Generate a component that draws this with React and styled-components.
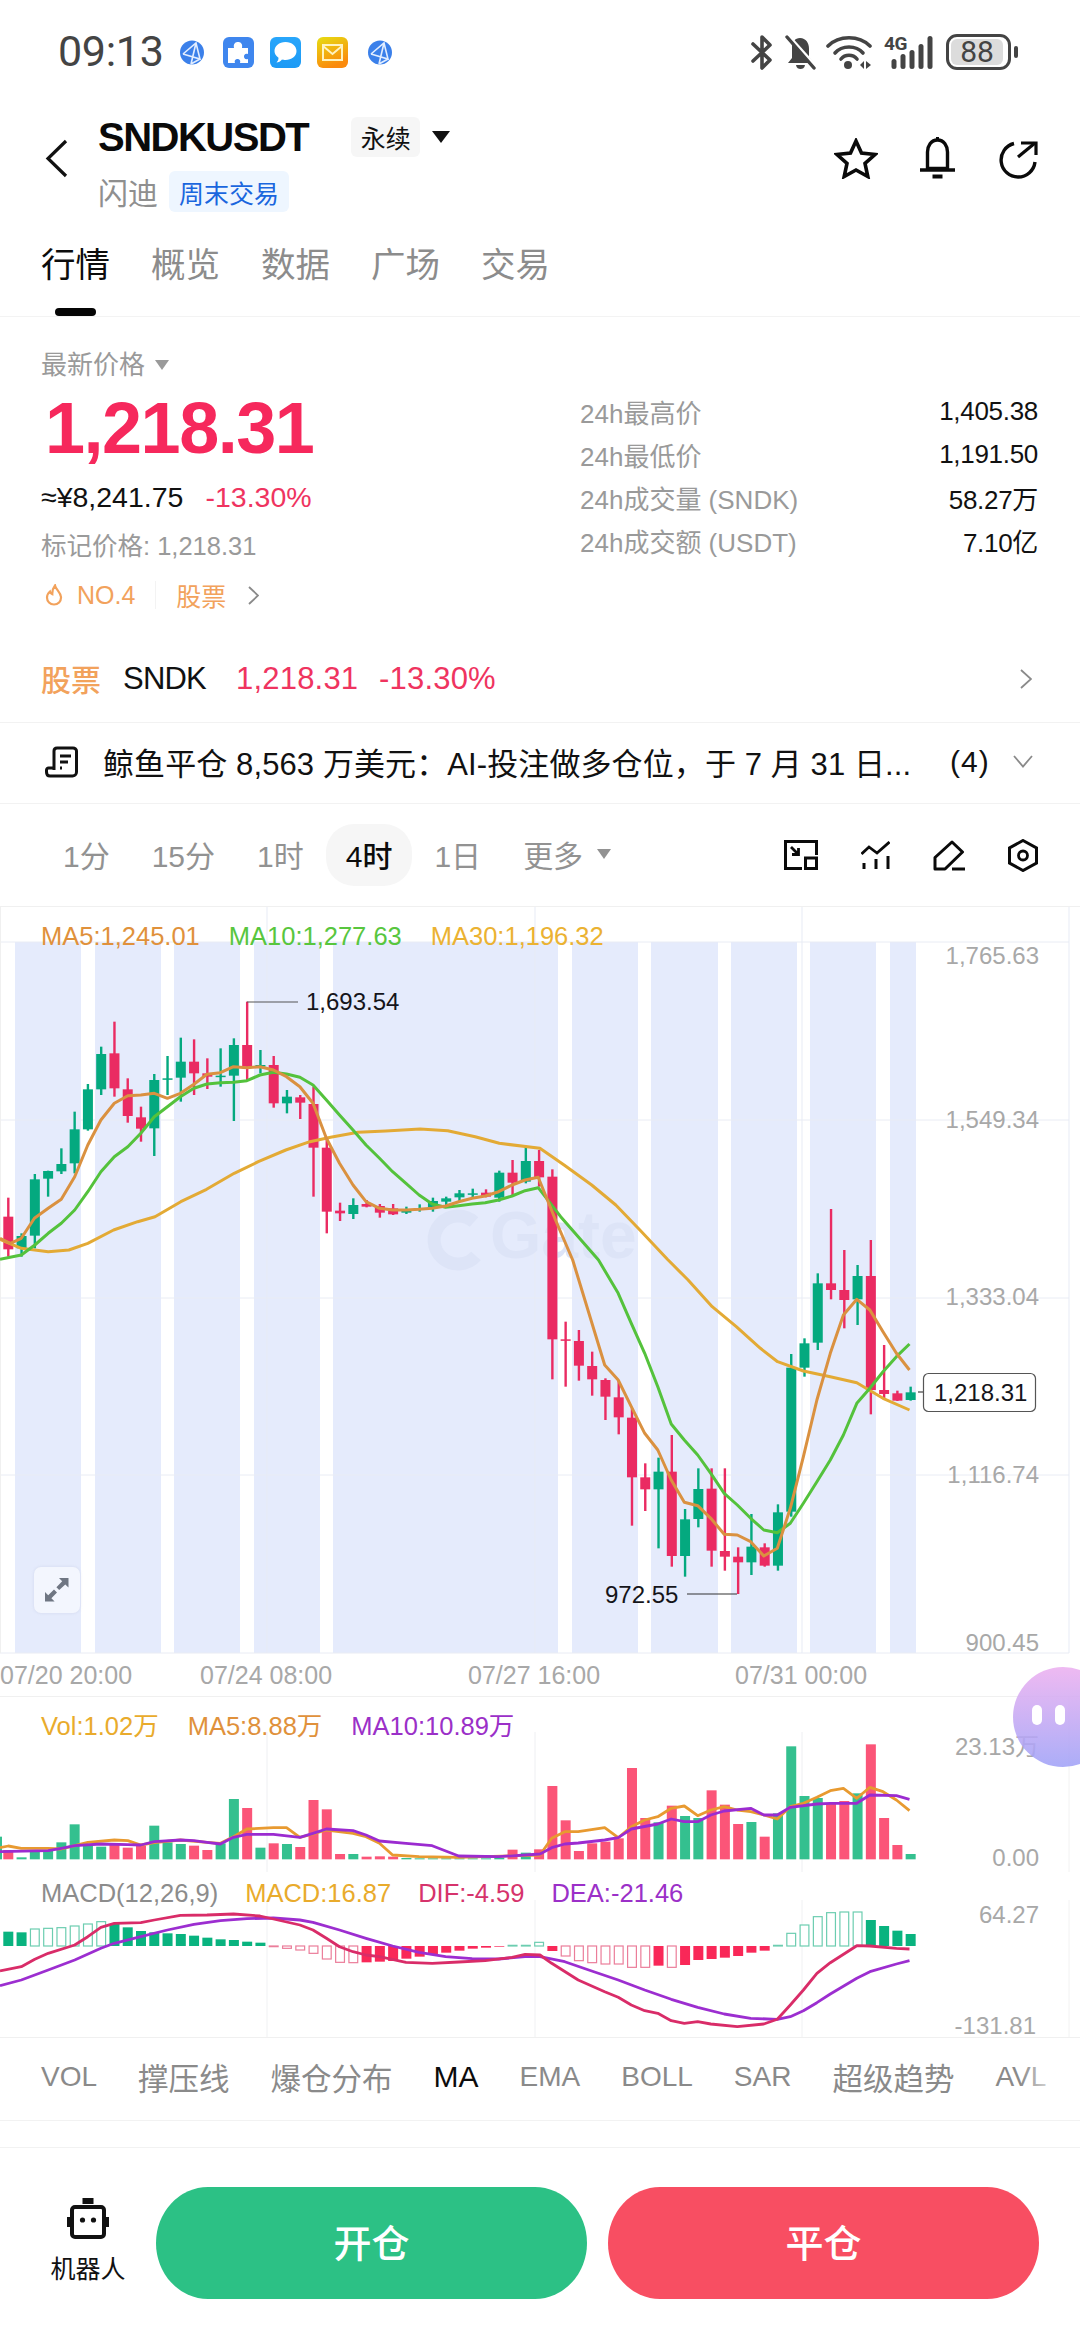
import React from 'react';
import styled, { createGlobalStyle } from 'styled-components';

const SANS = '"Liberation Sans", "Noto Sans CJK SC", sans-serif';

const Global = createGlobalStyle`
  html, body { margin: 0; padding: 0; background: #fff; }
  body { font-family: ${SANS}; }
  * { box-sizing: border-box; }
`;

const RED = '#ea2b62';
const GREEN = '#04a97f';
const VRED = '#fb5578';
const VGREEN = '#34c08f';
const X = i => 8.3 + 13.27 * i;
const P1 = 907, P2 = 1697, P3 = 1872;

const candlesA = [
  ['r',893,1070,950,1048],['g',1000,1070,1008,1045],['g',822,1045,838,1007],['g',812,890,813,836],['g',745,822,792,814],
  ['g',635,820,688,790],['g',552,692,568,688],['g',440,585,462,568],['r',365,590,460,565],['r',535,668,568,648],
  ['r',620,725,652,686],['g',522,768,540,685],['g',468,585,535,538],['g',413,605,485,533],['r',418,585,485,520],
  ['r',475,567,520,530],['g',445,560,527,531],['g',415,663,435,527],['r',305,540,435,500],['g',450,520,495,500],
  ['r',468,623,495,610],['g',570,640,590,610],['r',585,657,592,608],['r',560,890,612,743],['r',715,1000,743,935],
  ['r',908,963,932,940],['g',895,957,915,942],['r',900,922,912,920],['r',912,953,918,938],['r',912,945,925,943],
  ['g',920,942,928,938],['g',913,935,925,930],['g',893,935,903,922],['g',890,918,895,905],['g',870,903,880,892],
  ['g',866,895,880,884],['r',868,892,878,890],['g',812,905,818,893],['r',780,885,818,848],['g',740,850,783,845],
  ['r',750,860,783,832],
];
const candlesB = [
  ['r',-272,358,-250,238],['r',185,380,238,242],['r',210,362,243,317],['r',275,407,318,358],['r',355,480,360,410],
  ['r',360,523,412,472],['r',445,797,473,652],['r',610,753,652,688],['g',593,865,635,688],['r',525,920,635,888],
  ['g',747,950,778,888],['g',625,802,687,777],['r',625,920,686,872],['r',625,932,873,890],['r',862,1002,890,907],
  ['g',762,945,860,907],['r',850,920,862,917],['g',733,932,757,917],['g',282,770,323,755],['g',235,350,250,323],
  ['g',40,270,70,248],['r',-153,118,70,90],['r',-30,205,90,120],['g',15,195,48,118],['r',-60,463,48,390],
  ['r',255,418,390,402],['r',392,423,400,422],['g',380,422,397,420],
];
const candles = [
  ...candlesA.map(c => [c[0], 900 + c[1] / 3, 900 + c[2] / 3, 900 + c[3] / 3, 900 + c[4] / 3]),
  ...candlesB.map(c => [c[0], 1260 + c[1] / 3, 1260 + c[2] / 3, 1260 + c[3] / 3, 1260 + c[4] / 3]),
];

const line = (segs, top) => segs.flatMap(([pts, ox, oy]) =>
  pts.map(([x, y]) => `${(ox + x / 2.904).toFixed(1)},${(oy + y / 3 - top).toFixed(1)}`)).join(' ');

const ma5 = line([
  [[[0,1015],[30,1030],[62,1015],[100,955],[140,925],[178,898],[217,830],[255,735],[293,660],[332,610],[371,587],[409,585],[448,580],[486,595],[524,580],[563,553],[601,523],[640,518],[678,500],[717,503],[755,500],[794,510],[832,530],[871,560],[909,610],[948,715],[986,790],[1025,855],[1063,905],[1102,925],[1140,930],[1179,930],[1217,928],[1255,925],[1294,918],[1332,905],[1371,895],[1409,888],[1448,875],[1487,855],[1525,840],[1563,832]],0,900],
  [[[45,960],[95,1080]],540,900],
  [[[188,315],[227,360],[265,440],[304,520],[342,570],[381,660],[419,727],[458,737],[496,775],[535,823],[573,825],[612,845],[650,888],[689,865],[727,745],[765,590],[804,420],[843,280],[881,165],[920,118],[958,150],[996,215],[1035,280],[1073,330]],540,1260],
], P1);
const ma10 = line([
  [[[0,1078],[62,1065],[101,1035],[140,1000],[178,970],[217,930],[255,875],[293,815],[332,770],[371,740],[409,700],[448,650],[486,620],[524,590],[563,565],[601,552],[640,548],[678,547],[717,542],[755,525],[794,517],[832,522],[871,532],[909,555],[948,600],[986,645],[1025,690],[1063,735],[1102,775],[1140,815],[1179,850],[1217,885],[1255,912],[1294,922],[1332,917],[1371,912],[1409,908],[1448,900],[1487,888],[1525,872],[1563,863]],0,900],
  [[[60,950],[170,1080]],540,900],
  [[[227,100],[265,190],[304,280],[342,380],[381,492],[419,540],[458,585],[496,640],[535,700],[573,735],[612,775],[650,810],[689,818],[727,790],[765,730],[804,665],[843,600],[881,525],[920,430],[958,385],[996,335],[1035,290],[1073,252]],540,1260],
], P1);
const ma30 = line([
  [[[0,1018],[62,1045],[140,1055],[200,1050],[255,1030],[330,990],[400,965],[450,950],[525,905],[600,868],[680,820],[750,785],[830,750],[900,725],[960,712],[1040,697],[1120,693],[1220,687],[1300,692],[1380,710],[1450,730],[1568,745]],0,900],
  [[[70,795],[150,855],[220,915],[290,990],[370,1078]],540,900],
  [[[430,60],[500,140],[570,200],[640,265],[690,305],[765,333],[843,350],[920,368],[996,415],[1073,450]],540,1260],
], P1);

const bands = [[15,81],[95,161],[174,240],[254,320],[333,558],[572,638],[651,718],[731,797],[810,876],[890,916]];

const volTops = [[ 'r',510],['g',532],['g',515],['g',512],['g',487],['g',433],['g',495],['g',500],['r',490],['r',503],['r',497],['g',437],['g',487],['g',492],['r',497],['r',510],['g',490],['g',357],['r',384],['g',503],['r',490],['g',492],['r',501],['r',360],['r',388],['r',522],['g',522],['r',530],['r',529],['r',530],['g',534],['g',535],['g',535],['g',535],['g',535],['g',535],['g',535],['g',533],['r',509],['g',518],['r',508],
  ['r',318],['r',421],['r',513],['r',490],['r',485],['r',475],['r',264],['r',414],['g',427],['r',377],['g',408],['g',414],['r',331],['r',374],['r',432],['g',426],['r',470],['g',400],['g',199],['g',348],['g',354],['r',370],['r',363],['g',340],['r',193],['r',414],['r',495],['g',522]];

const volMa5 = line([
  [[[0,503],[24,498],[62,505],[140,505],[178,507],[217,497],[255,487],[332,480],[371,482],[409,495],[448,488],[524,480],[601,487],[640,490],[678,470],[717,447],[794,443],[832,443],[871,472],[909,462],[948,450],[1025,460],[1063,470],[1102,490],[1140,525],[1217,530],[1332,532]],0,1680],
  [[[0,525],[34,475],[72,455],[111,455],[188,443],[227,473],[265,440],[304,420],[342,410],[381,385],[419,378],[458,407],[496,390],[535,380],[573,390],[612,395],[650,405],[689,417],[727,380],[765,370],[804,352],[843,332],[881,325],[920,355],[958,322],[996,335],[1035,360],[1073,392]],540,1680],
], P2);
const volMa10 = line([
  [[[0,515],[140,512],[178,505],[217,497],[293,492],[371,494],[409,495],[448,485],[524,480],[563,482],[601,487],[640,492],[678,472],[717,463],[794,463],[871,472],[909,460],[948,447],[1025,452],[1063,465],[1102,483],[1179,490],[1255,497],[1332,528],[1448,530]],0,1680],
  [[[0,522],[34,503],[72,492],[111,489],[188,480],[227,473],[265,447],[342,432],[381,417],[419,425],[458,425],[496,405],[535,393],[612,385],[650,405],[689,405],[727,382],[804,372],[843,370],[920,370],[958,345],[1035,347],[1073,358]],540,1680],
], P2);

const macd = [[755,1],[757,1],[747,0],[745,0],[743,0],[738,0],[732,0],[725,0],[732,1],[742,1],[753,1],[757,1],[760,1],[762,1],[767,1],[773,1],[778,1],[780,1],[785,1],[788,1],
  [800,0],[805,0],[810,0],[820,0],[837,0],[847,0],[848,0],[847,1],[845,1],[843,1],[836,1],[830,1],[822,1],[818,1],[812,1],[806,1],[803,1],[800,1],[796,0],[796,0],[787,0],
  [813,1],[828,0],[842,0],[848,0],[852,0],[852,0],[862,0],[862,0],[857,1],[862,0],[855,1],[840,1],[837,1],[833,1],[828,1],[818,1],[812,1],[796,0],[760,0],[735,0],[710,0],[698,0],[696,0],[696,0],[720,1],[738,1],[752,1],[762,1]];

const dif = line([
  [[[0,873],[62,860],[101,838],[140,820],[217,795],[255,770],[293,742],[332,730],[409,728],[448,720],[524,706],[601,705],[678,702],[755,708],[794,717],[871,735],[909,750],[948,775],[986,800],[1025,815],[1063,825],[1102,830],[1179,847],[1255,850],[1332,846],[1409,842],[1487,832],[1525,823]],0,1680],
  [[[0,825],[34,850],[111,900],[188,935],[227,952],[265,975],[304,992],[342,1000],[381,1022],[419,1030],[458,1025],[496,1032],[573,1040],[650,1032],[689,1018],[727,975],[765,930],[804,880],[843,848],[920,797],[958,798],[1035,805],[1073,807]],540,1680],
], P3);
const dea = line([
  [[[0,917],[62,900],[140,870],[217,840],[293,805],[332,790],[409,770],[486,750],[563,733],[640,722],[717,716],[794,714],[871,720],[909,727],[986,750],[1063,775],[1140,798],[1217,817],[1294,830],[1371,836],[1448,837],[1525,830]],0,1680],
  [[[0,830],[72,845],[150,873],[227,900],[304,930],[381,958],[458,982],[535,1002],[612,1015],[689,1018],[727,1010],[765,992],[804,968],[843,942],[920,895],[958,875],[1035,852],[1073,842]],540,1680],
], P3);

const Page = styled.div`
  position: relative; width: 1080px; height: 2340px; overflow: hidden; background: #fff;
  font-family: ${SANS}; color: #111;
`;
const StatusBar = styled.div`
  height: 104px; display: flex; align-items: center; padding: 0 62px 0 58px;
`;
const Clock = styled.span`
  font-family: Roboto, sans-serif; font-size: 43px; color: #444; width: 122px; letter-spacing: -0.3px; padding-bottom: 2px;
`;
const AppIcons = styled.div`display: flex; align-items: center; gap: 16px;`;
const AppSlot = styled.span`display: flex; margin: 0 ${p => p.$r || 0}px 0 ${p => p.$l || 0}px;`;
const StatusRight = styled.div`margin-left: auto; display: flex; align-items: center; height: 40px;`;
const SignalBox = styled.div`
  position: relative; width: 50px; height: 34px; margin-left: 12px; display: flex; align-items: flex-end; justify-content: flex-end;
`;
const Net = styled.span`
  position: absolute; left: 0; top: -3px; font-family: Roboto, sans-serif; font-weight: 700; font-size: 19px; color: #444; letter-spacing: -0.5px;
`;
const Battery = styled.div`
  width: 65px; height: 36px; margin-left: 12px; border: 3px solid #444; border-radius: 11px; padding: 2px;
  display: flex;
`;
const BatteryFill = styled.div`
  width: 52px; background: #dcdcdc; border-radius: 6px; display: flex; align-items: center; justify-content: center;
  font-family: Roboto, sans-serif; font-size: 30px; color: #444; line-height: 1;
`;
const BatteryNub = styled.div`width: 4px; height: 12px; background: #444; border-radius: 2px; margin-left: 3px;`;

const Header = styled.div`height: 120px; display: flex; padding-left: 45px; position: relative;`;
const BackWrap = styled.div`width: 53px; padding-top: 35px;`;
const TitleCol = styled.div`display: flex; flex-direction: column; padding-top: 13px;`;
const TitleRow = styled.div`display: flex; align-items: center; height: 40px;`;
const Title = styled.span`font-size: 40px; font-weight: 700; letter-spacing: -1.5px; color: #0a0a0a; line-height: 40px;`;
const KindTag = styled.span`
  margin-left: 43px; width: 69px; height: 40px; background: #f6f6f6; border-radius: 6px; font-size: 25px; color: #111;
  display: flex; align-items: center; justify-content: center;
`;
const Tri = styled.span`
  display: inline-block; width: 0; height: 0; border-left: ${p => p.$w / 2}px solid transparent; border-right: ${p => p.$w / 2}px solid transparent;
  border-top: ${p => p.$h}px solid ${p => p.$c}; margin-left: ${p => p.$m}px;
`;
const SubRow = styled.div`display: flex; align-items: center; margin-top: 14px; height: 41px;`;
const SubName = styled.span`font-size: 30px; color: #8f8f8f; width: 71px; padding-bottom: 2px;`;
const WeekendTag = styled.span`
  width: 120px; height: 41px; background: #eef6ff; border-radius: 6px; color: #1a66de; font-size: 25px;
  display: flex; align-items: center; justify-content: center;
`;
const HeaderIcons = styled.div`margin-left: auto; padding: 33px 42px 0 0; display: flex; gap: 41px; align-items: flex-start;`;

const Tabs = styled.div`
  height: 93px; display: flex; gap: 41px; padding: 16px 0 0 41px; border-bottom: 1px solid #f3f3f3; position: relative;
`;
const Tab = styled.span`
  font-size: 34.5px; line-height: 50px; height: 50px; color: ${p => (p.$active ? '#0c0c0c' : '#8c8c8c')}; font-weight: 400;
  position: relative;
`;
const TabBar = styled.i`
  position: absolute; left: 14px; bottom: -26px; width: 41px; height: 8px; background: #050505; border-radius: 4px;
`;

const PriceSection = styled.section`height: 319px; display: flex; padding: 0 42px 0 41px;`;
const PriceLeft = styled.div`width: 539px; display: flex; flex-direction: column;`;
const LatestLabel = styled.div`
  margin-top: 33px; height: 30px; line-height: 30px; font-size: 26px; color: #9a9a9a; display: flex; align-items: center;
`;
const BigPrice = styled.div`
  margin-top: 10px; height: 76px; line-height: 76px; font-size: 72px; font-weight: 700; color: #f6285c; letter-spacing: -1.5px; padding-left: 4px;
`;
const SubPrice = styled.div`
  margin-top: 16px; height: 30px; line-height: 30px; font-size: 28.5px; color: #111; display: flex; gap: 22px;
`;
const Change = styled.span`color: ${p => p.$c || '#ef345f'};`;
const MarkPrice = styled.div`margin-top: 19px; height: 30px; line-height: 30px; font-size: 25.5px; color: #9a9a9a;`;
const HotRow = styled.div`
  margin-top: 19px; height: 30px; display: flex; align-items: center; font-size: 25px; color: #f2a25c;
`;
const HotSep = styled.span`width: 1px; height: 28px; background: #f3f3f3; margin: 0 20px 0 20px;`;
const StatsCol = styled.div`flex: 1; padding-top: 73px; display: flex; flex-direction: column;`;
const StatRow = styled.div`
  height: 43px; display: flex; align-items: center; justify-content: space-between; font-size: 26px;
`;
const StatLabel = styled.span`color: #9a9a9a;`;
const StatValue = styled.span`color: #111; letter-spacing: -0.3px;`;

const StockRow = styled.div`
  height: 87px; border-bottom: 1px solid #f2f2f2; display: flex; align-items: center; padding: 0 48px 0 41px; font-size: 31px;
`;
const StockTag = styled.span`font-size: 30px; color: #f2a25c; width: 82px; font-weight: 500; padding-bottom: 2px;`;
const StockName = styled.span`color: #111; width: 113px; letter-spacing: -0.8px;`;
const StockPrice = styled.span`color: ${p => p.$c}; width: ${p => p.$w}px; letter-spacing: 0.2px;`;
const PushRight = styled.span`margin-left: auto; display: flex;`;

const NewsRow = styled.div`
  height: 81px; border-bottom: 1px solid #f2f2f2; display: flex; align-items: center; padding: 0 47px 3px 45px;
`;
const NewsText = styled.span`margin-left: 25px; width: 805px; font-size: 31px; color: #111; white-space: nowrap; letter-spacing: 0.1px;`;
const NewsCount = styled.span`margin-left: 42px; font-size: 30px; color: #111; letter-spacing: 1px;`;

const TimeBar = styled.div`
  height: 103px; border-bottom: 1px solid #f0f0f0; display: flex; align-items: center; padding: 0 42px 0 43px; gap: 2px;
`;
const TimeItem = styled.span`
  height: 62px; padding: 0 20px 3px; display: flex; align-items: center; font-size: 30px; border-radius: 28px;
  color: ${p => (p.$active ? '#0c0c0c' : '#929292')}; background: ${p => (p.$active ? '#f6f6f6' : 'transparent')};
  font-weight: ${p => (p.$active ? 500 : 400)};
`;
const ToolIcons = styled.div`margin-left: auto; display: flex; gap: 43px; align-items: center;`;

const Pane = styled.div`
  position: relative; height: ${p => p.$h}px; ${p => (p.$line ? 'border-bottom: 1px solid #f0f0f0;' : '')}
`;
const Plot = styled.svg`position: absolute; left: 0; top: 0; width: 1080px; height: 100%;`;
const Legend = styled.div`
  position: relative; display: flex; gap: ${p => p.$gap || 30}px; padding: ${p => p.$top}px 0 0 41px; font-size: 25.5px; line-height: 30px; white-space: nowrap;
`;
const LegendItem = styled.span`color: ${p => p.$c};`;
const AxisText = styled.text`font-family: ${SANS}; font-size: ${p => p.$fs || 24}px; fill: ${p => p.$c || '#a8a8a8'}; text-anchor: ${p => p.$anchor || 'end'};`;
const MarkText = styled.text`font-family: ${SANS}; font-size: 24px; fill: #15151a;`;
const Watermark = styled.text`font-family: ${SANS}; font-size: 66px; font-weight: 700; fill: #dde4f7;`;

const ExpandBtn = styled.div`
  position: absolute; left: 34px; top: ${1567 - P1}px; width: 46px; height: 46px; background: #f3f6fe; border-radius: 7px;
  box-shadow: 0 0 3px rgba(150, 160, 190, .25); display: flex; align-items: center; justify-content: center;
`;
const Bubble = styled.div`
  position: absolute; left: 1013px; top: 1667px; width: 100px; height: 100px; border-radius: 50%;
  background: linear-gradient(180deg, rgba(236, 176, 240, .88) 0%, rgba(160, 162, 247, .88) 100%); display: flex; gap: 13px; padding: 38px 0 0 19px;
`;
const Eye = styled.i`width: 10px; height: 20px; border-radius: 5px; background: #fff; display: block;`;

const IndicatorBar = styled.div`
  height: 83px; display: flex; align-items: center; gap: 41px; padding: 0 0 5px 41px; overflow: hidden; white-space: nowrap; position: relative;
  border-bottom: 1px solid #f2f2f2;
`;
const Indicator = styled.span`
  font-size: ${p => (p.$active ? 30 : p.$latin ? 28 : 30.5)}px; color: ${p => (p.$active ? '#0c0c0c' : '#8a8a8a')};
`;
const FadeEdge = styled.i`
  position: absolute; right: 0; top: 0; bottom: 0; width: 60px; background: linear-gradient(90deg, rgba(255,255,255,0), #fff 75%);
`;
const Spacer = styled.div`height: 27px; border-bottom: 1px solid #f2f2f2;`;
const Footer = styled.div`display: flex; padding: 39px 41px 0 50px;`;
const Robot = styled.div`width: 76px; margin-right: 30px; display: flex; flex-direction: column; align-items: center; padding-top: 11px;`;
const RobotLabel = styled.span`font-size: 25px; color: #111; margin-top: 13px; line-height: 34px;`;
const TradeBtn = styled.div`
  width: 431px; height: 112px; border-radius: 52px / 56px; background: ${p => p.$c}; margin-left: ${p => p.$m || 0}px;
  color: #fff; font-size: 38px; font-weight: 500; display: flex; align-items: center; justify-content: center; padding-bottom: 5px;
`;

const Globe = () => (
  <svg width="24" height="25" viewBox="0 0 24 25">
    <circle cx="12" cy="12.5" r="12" fill="#3b80ea" />
    <path d="M3 14 L16 3 L20 19 L3 14 M16 3 L11 24 M20 19 L11 24" stroke="#e2edff" strokeWidth="1.6" fill="none" />
  </svg>
);
const Rounded = ({ fill, children }) => (
  <svg width="31" height="31" viewBox="0 0 31 31">
    {fill}
    {children}
  </svg>
);
const Puzzle = () => (
  <Rounded fill={<rect width="31" height="31" rx="6" fill="#3f86ee" />}>
    <path d="M5 11 H11 C10 6 13 5 15 5 C17 5 20 6 19 11 H25 V17 C22 16 21 18 21 19.5 C21 21 22 23 25 22 V26 H17 C18 23 16 22 14.5 22 C13 22 11 23 12 26 H5 Z" fill="#fff" />
  </Rounded>
);
const Chat = () => (
  <Rounded fill={
    <>
      <defs><linearGradient id="chatg" x1="0" y1="0" x2="0" y2="1"><stop offset="0" stopColor="#28a6fb" /><stop offset="1" stopColor="#1c9af5" /></linearGradient></defs>
      <rect width="31" height="31" rx="6" fill="url(#chatg)" />
    </>
  }>
    <path d="M15.5 5 C22 5 26.5 9 26.5 14 C26.5 19.5 21.5 23 15.5 23 C14 23 13 23 12 22.6 C10.5 24.5 8.5 25.5 6.5 25.5 C8 24 8.5 22.5 8.5 20.8 C6 19 4.5 16.7 4.5 14 C4.5 9 9 5 15.5 5 Z" fill="#fff" />
  </Rounded>
);
const Mail = () => (
  <Rounded fill={
    <>
      <defs><linearGradient id="mailg" x1="0" y1="0" x2="0.4" y2="1"><stop offset="0" stopColor="#e6dd12" /><stop offset="1" stopColor="#fb8a0c" /></linearGradient></defs>
      <rect width="31" height="31" rx="6" fill="url(#mailg)" />
    </>
  }>
    <path d="M6 8 H25 V23 H6 Z M6 9 L15.5 17 L25 9" fill="none" stroke="#fff3c0" strokeWidth="2" />
  </Rounded>
);
const Bluetooth = () => (
  <svg width="22" height="35" viewBox="0 0 22 35">
    <path d="M2 9 L19 25 L11 33 L11 2 L19 10 L2 26" fill="none" stroke="#444" strokeWidth="3.6" strokeLinejoin="round" strokeLinecap="round" />
  </svg>
);
const MuteBell = () => (
  <svg width="31" height="35" viewBox="0 0 31 35" style={{ marginLeft: 12 }}>
    <path d="M15 3 C21 3 24 8 24 14 V22 L29 28 H3 L7 23 V12 C7 7 10 3 15 3 Z" fill="#444" />
    <path d="M11 30 H20 C19.5 33 17.5 34 15.5 34 C13.5 34 11.5 33 11 30 Z" fill="#444" />
    <path d="M5 3 L30 31" stroke="#fff" strokeWidth="4" />
    <path d="M2 2 L29 33" stroke="#444" strokeWidth="3.4" strokeLinecap="round" />
  </svg>
);
const Wifi = () => (
  <svg width="46" height="35" viewBox="0 0 46 35" style={{ marginLeft: 10 }}>
    <path d="M2 11 C13 0 33 0 44 11" fill="none" stroke="#444" strokeWidth="3.6" strokeLinecap="round" />
    <path d="M9 18 C16 10 30 10 37 18" fill="none" stroke="#444" strokeWidth="3.6" strokeLinecap="round" />
    <path d="M15 24 C19 19 27 19 31 24" fill="none" stroke="#444" strokeWidth="3.6" strokeLinecap="round" />
    <circle cx="22" cy="30" r="4" fill="#444" />
    <path d="M34 30 L38 26 V34 Z M40 26 L45 30 L40 34 Z" fill="#444" />
  </svg>
);
const Bars = () => (
  <svg width="44" height="34" viewBox="0 0 44 34">
    {[[4, 10], [13, 15], [22, 19], [31, 25], [40, 33]].map(([x, h]) => (
      <rect key={x} x={x - 2.5} y={34 - h} width="5" height={h} rx="2.5" fill="#444" />
    ))}
  </svg>
);

const Back = () => (
  <svg width="24" height="39" viewBox="0 0 24 39"><path d="M21 2 L3 19.5 L21 37" fill="none" stroke="#111" strokeWidth="3.2" /></svg>
);
const Star = () => (
  <svg width="44" height="41" viewBox="0 0 44 41" style={{ marginTop: 1 }}>
    <path d="M22 3 L27.5 15 L41 16.5 L31 25.5 L33.8 38.5 L22 32 L10.2 38.5 L13 25.5 L3 16.5 L16.5 15 Z" fill="none" stroke="#0a0a0a" strokeWidth="3.6" strokeLinejoin="miter" />
  </svg>
);
const Bell = () => (
  <svg width="37" height="43" viewBox="0 0 37 43">
    <path d="M18.5 3 C25 3 28.5 9 28.5 15 V31.5 H8.5 V15 C8.5 9 12 3 18.5 3 Z" fill="none" stroke="#0a0a0a" strokeWidth="3.4" />
    <path d="M1 33 H36" stroke="#0a0a0a" strokeWidth="3.4" />
    <path d="M13.5 39.5 H23.5" stroke="#0a0a0a" strokeWidth="4" />
    <path d="M18.5 0 V3" stroke="#0a0a0a" strokeWidth="3" />
  </svg>
);
const Share = () => (
  <svg width="39" height="39" viewBox="0 0 39 39" style={{ marginTop: 3, marginLeft: 2 }}>
    <path d="M36 22 A17 17 0 1 1 15 3.5" fill="none" stroke="#0a0a0a" strokeWidth="3.4" />
    <path d="M19 17 L36 3" fill="none" stroke="#0a0a0a" strokeWidth="3.2" />
    <path d="M22 3 H37 V15" fill="none" stroke="#0a0a0a" strokeWidth="3.2" />
  </svg>
);
const Chevron = ({ c = '#8a8a8a', h = 19, w = 11 }) => (
  <svg width={w} height={h} viewBox={`0 0 ${w} ${h}`}><path d={`M1 1 L${w - 1} ${h / 2} L1 ${h - 1}`} fill="none" stroke={c} strokeWidth="1.8" /></svg>
);
const Flame = () => (
  <svg width="18" height="22" viewBox="0 0 18 22" style={{ margin: '0 14px 0 4px' }}>
    <path d="M10 1.5 C10.5 5 15.5 8 16 13 C16.3 17.5 13 20.5 9 20.5 C5 20.5 2 17.5 2 13.5 C2 11 3.3 9 5 7.5 C5.5 9 6.3 10 7.3 10.3 C7.2 7 8 4 10 1.5 Z" fill="none" stroke="#f2a25c" strokeWidth="2.2" />
  </svg>
);
const NewsIcon = () => (
  <svg width="33" height="32" viewBox="0 0 33 32">
    <path d="M9 24 V5 C9 3 10.5 2 12 2 H28 C30 2 31.5 3.5 31.5 5 V26 C31.5 28.5 29.5 30 27.5 30 H5 C3 30 1.5 28.5 1.5 26 V24 C1.5 23 2.5 22 3.5 22 H9" fill="none" stroke="#111" strokeWidth="3" />
    <path d="M15 10 H26 M15 16 H23 M15 22 H17" stroke="#111" strokeWidth="3" />
  </svg>
);
const DepthIcon = () => (
  <svg width="34" height="30" viewBox="0 0 34 30">
    <path d="M32.5 15 V1.5 H1.5 V28.5 H18" fill="none" stroke="#0a0a0a" strokeWidth="3" />
    <rect x="21.5" y="18" width="11" height="10.5" fill="none" stroke="#0a0a0a" strokeWidth="3" />
    <path d="M7 7 L14 14 M14.5 8 V14.5 H8" fill="none" stroke="#0a0a0a" strokeWidth="2.8" />
  </svg>
);
const TrendIcon = () => (
  <svg width="29" height="28" viewBox="0 0 29 28">
    <path d="M0.5 13 L8 6 L16 12 L28.5 1" fill="none" stroke="#0a0a0a" strokeWidth="2.8" />
    <path d="M3 22 V28 M15 18 V28 M27 15 V28" stroke="#0a0a0a" strokeWidth="3" />
  </svg>
);
const PenIcon = () => (
  <svg width="32" height="31" viewBox="0 0 32 31">
    <path d="M2 29 V17.5 L19 2 L29.5 12 L12 29 Z" fill="none" stroke="#0a0a0a" strokeWidth="3" strokeLinejoin="round" />
    <path d="M19 29 H32" stroke="#0a0a0a" strokeWidth="3" />
  </svg>
);
const HexIcon = () => (
  <svg width="30" height="33" viewBox="0 0 30 33">
    <path d="M15 1.5 L28.5 9 V24 L15 31.5 L1.5 24 V9 Z" fill="none" stroke="#0a0a0a" strokeWidth="3" />
    <circle cx="15" cy="16.5" r="4.5" fill="none" stroke="#0a0a0a" strokeWidth="2.8" />
  </svg>
);
const ExpandIcon = () => (
  <svg width="24" height="24" viewBox="0 0 24 24">
    <path d="M14 0 H23.5 V9.5 L20.3 6.4 L14.2 12 L11.4 9.2 L17.2 3.2 Z M0 14 L3.2 17.2 L9 11.5 L12 14.4 L6.4 20.3 L9.6 23.5 H0 Z" fill="#6f7683" />
  </svg>
);
const RobotIcon = () => (
  <svg width="42" height="41" viewBox="0 0 42 41">
    <rect x="15.5" y="0" width="11" height="6" fill="#111" />
    <rect x="5" y="9" width="32" height="30" rx="3" fill="none" stroke="#111" strokeWidth="4" />
    <rect x="0" y="19" width="3.5" height="10" fill="#111" />
    <rect x="38.5" y="19" width="3.5" height="10" fill="#111" />
    <circle cx="15.5" cy="22" r="2.6" fill="#111" />
    <circle cx="26.5" cy="22" r="2.6" fill="#111" />
  </svg>
);

const PricePlot = () => {
  const top = P1;
  return (
    <Plot viewBox="0 0 1080 789" preserveAspectRatio="none">
      {bands.map(([a, b]) => <rect key={a} x={a} y={942 - top} width={b - a} height={711} fill="#e5ebfc" />)}
      {[942, 1120, 1298, 1475, 1653].map(y => <line key={y} x1="0" x2="1069" y1={y - top} y2={y - top} stroke="#e9ecf4" strokeWidth="1" />)}
      {[267, 535, 802, 1069].map(x => <line key={x} x1={x} x2={x} y1="0" y2={1653 - top} stroke="#e7ebf5" strokeWidth="1" />)}
      <line x1="0.5" x2="0.5" y1="0" y2={1653 - top} stroke="#f0f0f0" />
      <path d={`M474 ${1222 - top} A24 24 0 1 0 476 ${1256 - top}`} fill="none" stroke="#dde4f7" strokeWidth="13" />
      <Watermark x="490" y={1258 - top}>Gate</Watermark>
      {candles.map((c, i) => {
        const col = c[0] === 'r' ? RED : GREEN;
        const cx = X(i);
        return (
          <g key={i} fill={col}>
            <rect x={cx - 1.2} y={c[1] - top} width="2.4" height={c[2] - c[1]} />
            <rect x={cx - 5} y={c[3] - top} width="10" height={Math.max(c[4] - c[3], 1.5)} />
          </g>
        );
      })}
      <polyline points={ma30} fill="none" stroke="#e3aa35" strokeWidth="3" strokeLinejoin="round" />
      <polyline points={ma10} fill="none" stroke="#54c23c" strokeWidth="3" strokeLinejoin="round" />
      <polyline points={ma5} fill="none" stroke="#da9140" strokeWidth="3" strokeLinejoin="round" />
      <path d={`M247 ${1002 - top} H298`} stroke="#555" strokeWidth="1.2" fill="none" />
      <MarkText x="306" y={1010 - top}>1,693.54</MarkText>
      <path d={`M687 ${1594 - top} H737`} stroke="#333" strokeWidth="1.2" fill="none" />
      <MarkText x="605" y={1603 - top}>972.55</MarkText>
      <path d={`M918 ${1392 - top} H923`} stroke="#444" strokeWidth="1.2" />
      <rect x="923.5" y={1373.5 - top} width="112" height="38" rx="5" fill="#fff" stroke="#555" strokeWidth="1.2" />
      <MarkText x="934" y={1401 - top}>1,218.31</MarkText>
      <AxisText x="1039" y={964 - top}>1,765.63</AxisText>
      <AxisText x="1039" y={1128 - top}>1,549.34</AxisText>
      <AxisText x="1039" y={1305 - top}>1,333.04</AxisText>
      <AxisText x="1039" y={1483 - top}>1,116.74</AxisText>
      <AxisText x="1039" y={1651 - top}>900.45</AxisText>
      <AxisText x="0" y={1684 - top} $anchor="start" $fs={25}>07/20 20:00</AxisText>
      <AxisText x="200" y={1684 - top} $anchor="start" $fs={25}>07/24 08:00</AxisText>
      <AxisText x="468" y={1684 - top} $anchor="start" $fs={25}>07/27 16:00</AxisText>
      <AxisText x="735" y={1684 - top} $anchor="start" $fs={25}>07/31 00:00</AxisText>
    </Plot>
  );
};

const VolPlot = () => {
  const base = 1680 + 538 / 3 - P2;
  return (
    <Plot viewBox="0 0 1080 175" preserveAspectRatio="none">
      {[267, 535, 802].map(x => <line key={x} x1={x} x2={x} y1={1732 - P2} y2="175" stroke="#eeeff2" />)}
      <line x1="1069" x2="1069" y1="0" y2="175" stroke="#f2f2f2" />
      <rect x="0" y={1680 + 470 / 3 - P2} width="2" height={68 / 3} fill={VGREEN} />
      {volTops.map(([c, t], i) => {
        const y = 1680 + t / 3 - P2;
        return <rect key={i} x={X(i) - 5} y={y} width="10" height={base - y} fill={c === 'r' ? VRED : VGREEN} />;
      })}
      <polyline points={volMa5} fill="none" stroke="#e89a30" strokeWidth="2.8" strokeLinejoin="round" />
      <polyline points={volMa10} fill="none" stroke="#9b2bd0" strokeWidth="2.8" strokeLinejoin="round" />
      <AxisText x="1039" y={1755 - P2}>23.13万</AxisText>
      <AxisText x="1039" y={1866 - P2}>0.00</AxisText>
    </Plot>
  );
};

const MacdPlot = () => {
  const zero = 1680 + 798 / 3 - P3;
  return (
    <Plot viewBox="0 0 1080 165" preserveAspectRatio="none">
      {[267, 535, 802].map(x => <line key={x} x1={x} x2={x} y1={1900 - P3} y2="165" stroke="#f0f1f3" />)}
      <line x1="1069" x2="1069" y1="28" y2="165" stroke="#f2f2f2" />
      {macd.map(([v, filled], i) => {
        const y = 1680 + v / 3 - P3;
        const up = y < zero;
        const t = Math.min(y, zero);
        const h = Math.max(Math.abs(y - zero), 0.5);
        const cx = X(i);
        if (filled) return <rect key={i} x={cx - 5} y={t} width="10" height={h} fill={up ? '#09b37f' : '#f92858'} />;
        return <rect key={i} x={cx - 4.4} y={t} width="8.8" height={h} fill="#fff" stroke={up ? '#6ccdb0' : '#eb7d9a'} strokeWidth="1.2" />;
      })}
      <polyline points={dea} fill="none" stroke="#9c2ed0" strokeWidth="2.8" strokeLinejoin="round" />
      <polyline points={dif} fill="none" stroke="#d92c68" strokeWidth="2.8" strokeLinejoin="round" />
      <AxisText x="1039" y={1923 - P3}>64.27</AxisText>
      <AxisText x="1036" y={2034 - P3}>-131.81</AxisText>
    </Plot>
  );
};

const stats = [
  ['24h最高价', '1,405.38'],
  ['24h最低价', '1,191.50'],
  ['24h成交量 (SNDK)', '58.27万'],
  ['24h成交额 (USDT)', '7.10亿'],
];
const tfs = ['1分', '15分', '1时', '4时', '1日'];
const inds = [['VOL', 1], ['撑压线'], ['爆仓分布'], ['MA', 1, 1], ['EMA', 1], ['BOLL', 1], ['SAR', 1], ['超级趋势'], ['AVL', 1]];

export default function App() {
  return (
    <Page>
      <Global />
      <StatusBar>
        <Clock>09:13</Clock>
        <AppIcons>
          <AppSlot $r={3}><Globe /></AppSlot>
          <Puzzle /><Chat /><Mail />
          <AppSlot $l={4}><Globe /></AppSlot>
        </AppIcons>
        <StatusRight>
          <Bluetooth /><MuteBell /><Wifi />
          <SignalBox><Net>4G</Net><Bars /></SignalBox>
          <Battery><BatteryFill>88</BatteryFill></Battery>
          <BatteryNub />
        </StatusRight>
      </StatusBar>

      <Header>
        <BackWrap><Back /></BackWrap>
        <TitleCol>
          <TitleRow>
            <Title>SNDKUSDT</Title>
            <KindTag>永续</KindTag>
            <Tri $w={18} $h={12} $c="#111" $m={12} />
          </TitleRow>
          <SubRow>
            <SubName>闪迪</SubName>
            <WeekendTag>周末交易</WeekendTag>
          </SubRow>
        </TitleCol>
        <HeaderIcons><Star /><Bell /><Share /></HeaderIcons>
      </Header>

      <Tabs>
        <Tab $active>行情<TabBar /></Tab>
        <Tab>概览</Tab><Tab>数据</Tab><Tab>广场</Tab><Tab>交易</Tab>
      </Tabs>

      <PriceSection>
        <PriceLeft>
          <LatestLabel>最新价格<Tri $w={15} $h={10} $c="#9a9a9a" $m={10} /></LatestLabel>
          <BigPrice>1,218.31</BigPrice>
          <SubPrice><span>≈¥8,241.75</span><Change>-13.30%</Change></SubPrice>
          <MarkPrice>标记价格: 1,218.31</MarkPrice>
          <HotRow>
            <Flame />NO.4<HotSep />股票
            <span style={{ width: 22 }} />
            <Chevron />
          </HotRow>
        </PriceLeft>
        <StatsCol>
          {stats.map(([l, v]) => (
            <StatRow key={l}><StatLabel>{l}</StatLabel><StatValue>{v}</StatValue></StatRow>
          ))}
        </StatsCol>
      </PriceSection>

      <StockRow>
        <StockTag>股票</StockTag>
        <StockName>SNDK</StockName>
        <StockPrice $c="#ef345f" $w={143}>1,218.31</StockPrice>
        <StockPrice $c="#ef345f">-13.30%</StockPrice>
        <PushRight><Chevron h={20} w={12} /></PushRight>
      </StockRow>

      <NewsRow>
        <NewsIcon />
        <NewsText>鲸鱼平仓 8,563 万美元：AI-投注做多仓位，于 7 月 31 日...</NewsText>
        <NewsCount>(4)</NewsCount>
        <PushRight>
          <svg width="20" height="13" viewBox="0 0 20 13"><path d="M1 1 L10 11.5 L19 1" fill="none" stroke="#8a8a8a" strokeWidth="1.8" /></svg>
        </PushRight>
      </NewsRow>

      <TimeBar>
        {tfs.map((t, i) => <TimeItem key={t} $active={i === 3}>{t}</TimeItem>)}
        <TimeItem>更多<Tri $w={15} $h={10} $c="#929292" $m={14} /></TimeItem>
        <ToolIcons><DepthIcon /><TrendIcon /><PenIcon /><HexIcon /></ToolIcons>
      </TimeBar>

      <Pane $h={790} $line>
        <PricePlot />
        <Legend $top={14} $gap={29}>
          <LegendItem $c="#e0913b">MA5:1,245.01</LegendItem>
          <LegendItem $c="#58c63e">MA10:1,277.63</LegendItem>
          <LegendItem $c="#ebb232">MA30:1,196.32</LegendItem>
        </Legend>
        <ExpandBtn><ExpandIcon /></ExpandBtn>
      </Pane>

      <Pane $h={175}>
        <VolPlot />
        <Legend $top={14} $gap={29}>
          <LegendItem $c="#e9ab2c">Vol:1.02万</LegendItem>
          <LegendItem $c="#e0913b">MA5:8.88万</LegendItem>
          <LegendItem $c="#9b30c8">MA10:10.89万</LegendItem>
        </Legend>
      </Pane>

      <Pane $h={166} $line>
        <MacdPlot />
        <Legend $top={6} $gap={27}>
          <LegendItem $c="#8c8c8c">MACD(12,26,9)</LegendItem>
          <LegendItem $c="#e9ab2c">MACD:16.87</LegendItem>
          <LegendItem $c="#d6336c">DIF:-4.59</LegendItem>
          <LegendItem $c="#9b30c8">DEA:-21.46</LegendItem>
        </Legend>
      </Pane>

      <IndicatorBar>
        {inds.map(([t, latin, active]) => <Indicator key={t} $latin={latin} $active={active}>{t}</Indicator>)}
        <FadeEdge />
      </IndicatorBar>
      <Spacer />
      <Footer>
        <Robot>
          <RobotIcon />
          <RobotLabel>机器人</RobotLabel>
        </Robot>
        <TradeBtn $c="#2cc185">开仓</TradeBtn>
        <TradeBtn $c="#f84e62" $m={21}>平仓</TradeBtn>
      </Footer>

      <Bubble><Eye /><Eye /></Bubble>
    </Page>
  );
}
